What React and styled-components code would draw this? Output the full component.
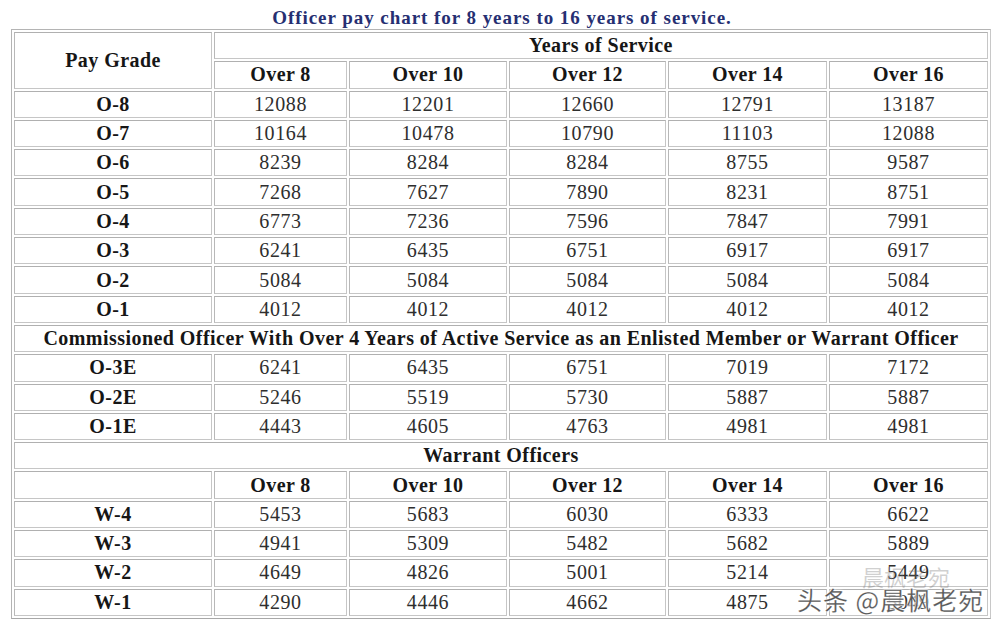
import React from "react";
import styled, { createGlobalStyle } from "styled-components";

const Global = createGlobalStyle`
  html, body { margin: 0; padding: 0; background: #ffffff; }
  body { font-family: "Liberation Serif", "Times New Roman", serif; }
`;

const Page = styled.div`
  position: relative;
  width: 1000px;
  height: 626px;
  overflow: hidden;
  background: #fff;
`;

const Title = styled.div`
  height: 29px;
  line-height: 35px;
  text-align: center;
  padding-left: 4px;
  font-size: 19px;
  letter-spacing: 0.95px;
  font-weight: bold;
  color: #262f72;
`;

const Table = styled.table`
  margin-left: 11px;
  width: 980px;
  table-layout: fixed;
  border-collapse: separate;
  border-spacing: 2px;
  border: 1px solid #b4b4b4;
  border-right-color: #c8c8c8;
  border-bottom-color: #a8a8a8;
`;

const Row = styled.tr`
  height: 27.3px;
`;

const Cell = styled.td`
  box-sizing: border-box;
  padding: 0;
  border: 1px solid #c6c6c6;
  border-top-color: #b0b0b0;
  border-left-color: #b8b8b8;
  text-align: center;
  vertical-align: middle;
  font-size: 20px;
  line-height: 25px;
  letter-spacing: ${(p) => (p.$head ? "0.45px" : "0.6px")};
  color: ${(p) => (p.$head ? "#161616" : "#2e2e2e")};
  font-weight: ${(p) => (p.$head ? "bold" : "normal")};
  white-space: nowrap;
  overflow: visible;
`;

const Watermark = styled.div`
  position: absolute;
  left: 797px;
  top: 581px;
  font-family: "Noto Sans CJK SC", sans-serif;
  font-size: 25px;
  letter-spacing: 1px;
  color: rgba(60, 60, 60, 0.85);
  -webkit-text-stroke: 0.3px rgba(255, 255, 255, 0.6);
  text-shadow: 0 0 2px #fff, 0 0 3px #fff;
`;

const Ghost = styled.div`
  position: absolute;
  left: 862px;
  top: 560px;
  font-family: "Noto Sans CJK SC", sans-serif;
  font-size: 22px;
  color: rgba(120, 120, 120, 0.35);
`;

const cols = [198, 133, 158, 157, 159, 159];
const years = ["Over 8", "Over 10", "Over 12", "Over 14", "Over 16"];

const officers = [
  ["O-8", 12088, 12201, 12660, 12791, 13187],
  ["O-7", 10164, 10478, 10790, 11103, 12088],
  ["O-6", 8239, 8284, 8284, 8755, 9587],
  ["O-5", 7268, 7627, 7890, 8231, 8751],
  ["O-4", 6773, 7236, 7596, 7847, 7991],
  ["O-3", 6241, 6435, 6751, 6917, 6917],
  ["O-2", 5084, 5084, 5084, 5084, 5084],
  ["O-1", 4012, 4012, 4012, 4012, 4012],
];

const enlisted = [
  ["O-3E", 6241, 6435, 6751, 7019, 7172],
  ["O-2E", 5246, 5519, 5730, 5887, 5887],
  ["O-1E", 4443, 4605, 4763, 4981, 4981],
];

const warrant = [
  ["W-4", 5453, 5683, 6030, 6333, 6622],
  ["W-3", 4941, 5309, 5482, 5682, 5889],
  ["W-2", 4649, 4826, 5001, 5214, 5449],
  ["W-1", 4290, 4446, 4662, 4875, 5049],
];

const DataRow = ({ r }) => (
  <Row>
    <Cell $head>{r[0]}</Cell>
    {r.slice(1).map((v, i) => (
      <Cell key={i}>{v}</Cell>
    ))}
  </Row>
);

export default function App() {
  return (
    <Page>
      <Global />
      <Title>Officer pay chart for 8 years to 16 years of service.</Title>
      <Table>
        <colgroup>
          {cols.map((w, i) => (
            <col key={i} style={{ width: w }} />
          ))}
        </colgroup>
        <tbody>
          <Row>
            <Cell $head rowSpan={2}>Pay Grade</Cell>
            <Cell $head colSpan={5}>Years of Service</Cell>
          </Row>
          <Row>
            {years.map((y) => (
              <Cell $head key={y}>{y}</Cell>
            ))}
          </Row>
          {officers.map((r) => (
            <DataRow key={r[0]} r={r} />
          ))}
          <Row>
            <Cell $head colSpan={6}>
              Commissioned Officer With Over 4 Years of Active Service as an Enlisted Member or Warrant Officer
            </Cell>
          </Row>
          {enlisted.map((r) => (
            <DataRow key={r[0]} r={r} />
          ))}
          <Row>
            <Cell $head colSpan={6}>Warrant Officers</Cell>
          </Row>
          <Row>
            <Cell />
            {years.map((y) => (
              <Cell $head key={y}>{y}</Cell>
            ))}
          </Row>
          {warrant.map((r) => (
            <DataRow key={r[0]} r={r} />
          ))}
        </tbody>
      </Table>
      <Ghost>晨枫老宛</Ghost>
      <Watermark>头条 @晨枫老宛</Watermark>
    </Page>
  );
}
